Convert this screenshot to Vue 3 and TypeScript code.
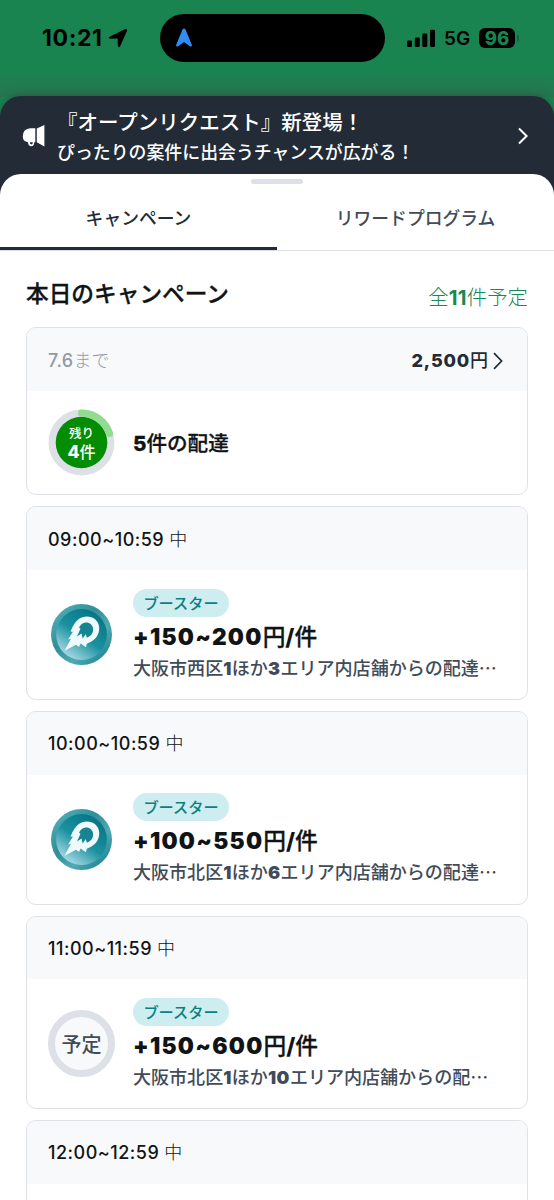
<script setup lang="ts">
interface Run {
  text: string
  kind: 'latin' | 'slash' | 'jp'
}

interface Offer {
  amount: string
  area: string
  scheduled: boolean
}

interface Boost {
  time: string
  offer?: Offer
}

const boosts: Boost[] = [
  { time: '09:00~10:59', offer: { amount: '+150~200円/件', area: '大阪市西区1ほか3エリア内店舗からの配達…', scheduled: false } },
  { time: '10:00~10:59', offer: { amount: '+100~550円/件', area: '大阪市北区1ほか6エリア内店舗からの配達…', scheduled: false } },
  { time: '11:00~11:59', offer: { amount: '+150~600円/件', area: '大阪市北区1ほか10エリア内店舗からの配…', scheduled: true } },
  { time: '12:00~12:59' },
]

// Splits a string into Latin and Japanese runs so each can carry its own weight.
function runs(text: string): Run[] {
  const parts = text.match(/[\x21-\x7e]+|[^\x21-\x7e]+/g) ?? []
  return parts.map((part) => ({
    text: part,
    kind: part === '/' ? 'slash' : /^[\x21-\x7e]/.test(part) ? 'latin' : 'jp',
  }))
}
</script>

<template>
  <div class="screen">
    <header class="status">
      <div class="clock">
        <span class="time">10:21</span>
        <svg class="loc" viewBox="0 0 20 20"><path d="M1.6 8.7 16.8 1.2Q19.6 .3 18.9 3L12.3 18Q10.8 20.6 9.8 17.8L9.7 10.6 2.4 10.7Q-.6 10.2 1.6 8.7Z" /></svg>
      </div>
      <div class="island">
        <svg class="nav" viewBox="0 0 18 20"><path d="M7.4 1.7Q9-.7 10.6 1.7L16.8 16.8Q17.2 19.3 14.9 18.2L9 14.1 3.1 18.2Q.8 19.3 1.2 16.8Z" /></svg>
      </div>
      <div class="signals">
        <svg class="bars" viewBox="0 0 29 19">
          <rect x="0" y="11.6" width="5" height="6.4" rx="1.3" />
          <rect x="7.8" y="8.6" width="5" height="9.4" rx="1.3" />
          <rect x="15.3" y="4.6" width="5" height="13.4" rx="1.3" />
          <rect x="23" y=".8" width="5" height="17.2" rx="1.3" />
        </svg>
        <span class="net">5G</span>
        <span class="battery">96</span>
        <span class="cap"></span>
      </div>
    </header>

    <section class="promo">
      <svg class="horn" viewBox="0 0 24 24">
        <path d="M13.3 4.2V18.2H12.2Q12.2 22.3 9.2 22.3 6.3 22.3 6 18.2 .8 17.3 .8 12.4 .8 4.8 8.5 4.2ZM14.8 4.4 22.4 1V22.5L14.8 18.3Z" />
        <path class="notch" d="M8 18.2H10.7V19.6Q9.3 21.2 8 19.6Z" />
      </svg>
      <div class="promo-copy">
        <p class="promo-title">『オープンリクエスト』新登場！</p>
        <p class="promo-sub">ぴったりの案件に出会うチャンスが広がる！</p>
      </div>
      <svg class="promo-arrow" viewBox="0 0 12 18"><path d="M2 1.5 9.6 9 2 16.5" /></svg>
    </section>

    <main class="sheet">
      <div class="handle"></div>
      <nav class="tabs">
        <div class="tab active"><span>キャンペーン</span></div>
        <div class="tab"><span>リワードプログラム</span></div>
      </nav>

      <div class="content">
        <div class="heading">
          <h1>本日のキャンペーン</h1>
          <span class="count">全<b>11</b>件予定</span>
        </div>

        <article class="card quest">
          <div class="card-head">
            <span class="until"><b>7.6</b>まで</span>
            <span class="reward"><b>2,500</b>円<svg viewBox="0 0 12 18"><path d="M2 1.2 9.6 9 2 16.8" /></svg></span>
          </div>
          <div class="card-body">
            <div class="medal">
              <svg class="progress" viewBox="0 0 68 68">
                <circle class="track" cx="34" cy="34" r="29.8" />
                <circle class="core" cx="34" cy="34" r="26.2" />
                <path class="arc" d="M34 4.2A29.8 29.8 0 0 1 62.3 24.7" />
              </svg>
              <span class="left">残り</span>
              <span class="num"><b>4</b>件</span>
            </div>
            <p class="quest-title"><b>5</b>件の配達</p>
          </div>
        </article>

        <article v-for="boost in boosts" :key="boost.time" class="card">
          <div class="card-head">
            <span class="range"><b>{{ boost.time }}</b> 中</span>
          </div>
          <div v-if="boost.offer" class="card-body">
            <div v-if="boost.offer.scheduled" class="medal planned">予定</div>
            <div v-else class="medal">
              <svg class="coin" viewBox="0 0 62 62">
                <defs>
                  <linearGradient id="rim" x1="0" y1="0" x2="1" y2="1">
                    <stop offset="0" stop-color="#55b1b9" />
                    <stop offset=".15" stop-color="#4aa8b1" />
                    <stop offset=".4" stop-color="#2f8e9a" />
                    <stop offset=".65" stop-color="#50aab3" />
                    <stop offset="1" stop-color="#087785" />
                  </linearGradient>
                  <linearGradient id="face" x1=".8" y1=".15" x2=".25" y2=".95">
                    <stop offset="0" stop-color="#087887" />
                    <stop offset=".5" stop-color="#1b91a0" />
                    <stop offset="1" stop-color="#a6d9e3" />
                  </linearGradient>
                </defs>
                <circle cx="31" cy="31" r="31" fill="url(#rim)" />
                <circle cx="31" cy="31" r="25.8" fill="url(#face)" />
                <path fill="#effafd" d="M13.8 47.5 20.3 35.2 17.4 36.2 22.2 28.2 19.8 27.9Q23.5 18.6 28 15.4C36 9.8 48.4 13.4 49 24 49.4 32 44 38 36.4 40.4L35.5 44 30 40.2 28.6 43.6 25.4 41.4Z" />
                <path fill="#168491" d="M28.6 24.2C30 19.6 36.4 16.8 40.6 20.6 45.2 25.2 42.4 32.6 36.4 34.2L35.4 30.6 32.2 35 31 30 26.4 33 30 25.2Z" />
              </svg>
            </div>
            <div class="info">
              <span class="badge">ブースター</span>
              <p class="amount"><span v-for="(run, i) in runs(boost.offer.amount)" :key="i" :class="run.kind">{{ run.text }}</span></p>
              <p class="area"><span v-for="(run, i) in runs(boost.offer.area)" :key="i" :class="run.kind">{{ run.text }}</span></p>
            </div>
          </div>
        </article>
      </div>
    </main>
  </div>
</template>

<style>
html,
body {
  margin: 0;
  overflow: hidden;
}
</style>

<style scoped>
.screen {
  width: 554px;
  height: 1200px;
  overflow: hidden;
  background: #198450;
  color: #111416;
  font-family: Inter, "Noto Sans CJK JP", sans-serif;
  font-weight: 500;
  white-space: nowrap;
}
p,
h1 {
  margin: 0;
}
b {
  font-weight: inherit;
}
svg {
  display: block;
  flex: none;
}
.jp {
  font-family: "Noto Sans CJK JP", sans-serif;
}

.status {
  display: flex;
  height: 97px;
  box-sizing: border-box;
  padding-top: 14px;
  color: #000;
  background: linear-gradient(#198450 0 70px, #267651 97px);
}
.clock {
  display: flex;
  width: 118px;
  height: 48px;
  padding-left: 42px;
  align-items: center;
}
.time {
  width: 66px;
  font-size: 23px;
  font-weight: 700;
  letter-spacing: 0.6px;
}
.loc {
  width: 20px;
  height: 20px;
}
.island {
  display: flex;
  width: 225px;
  height: 48px;
  border-radius: 24px;
  background: #000;
  align-items: center;
}
.nav {
  width: 18px;
  height: 20px;
  margin: 0 0 0 15px;
  fill: #2f8df5;
}
.signals {
  display: flex;
  height: 48px;
  padding-left: 22px;
  align-items: center;
}
.bars {
  width: 29px;
  height: 19px;
}
.net {
  width: 35px;
  margin-left: 8px;
  font-size: 19px;
  font-weight: 600;
}
.battery {
  width: 36px;
  height: 20px;
  border-radius: 6px;
  background: #000;
  color: #198450;
  font-size: 18.5px;
  font-weight: 800;
  line-height: 20px;
  text-align: center;
}
.cap {
  width: 2px;
  height: 7px;
  margin-left: 2px;
  border-radius: 0 2px 2px 0;
  background: #176642;
}

.promo {
  display: flex;
  height: 78px;
  margin-top: -1px;
  padding-bottom: 24px;
  border-radius: 21px 21px 0 0;
  background: #222b36;
  box-shadow: 0 0 8px rgba(40, 60, 60, 0.6);
  color: #fff;
}
.horn {
  width: 24px;
  height: 24px;
  margin: 28px 0 0 22px;
  fill: #fff;
}
.notch {
  fill: #222b36;
}
.promo-copy {
  width: 460px;
  margin-left: 11px;
}
.promo-title {
  height: 30px;
  margin-top: 12px;
  font-size: 20.5px;
  line-height: 30px;
}
.promo-sub {
  height: 28px;
  font-size: 17.9px;
  line-height: 29px;
}
.promo-arrow {
  width: 12px;
  height: 18px;
  margin-top: 31px;
  fill: none;
  stroke: #fff;
  stroke-width: 2;
}

.sheet {
  position: relative;
  height: 1026px;
  margin-top: -24px;
  border-radius: 21px 21px 0 0;
  background: #fff;
  overflow: hidden;
}
.handle {
  width: 52px;
  height: 5px;
  margin: 5px auto 0;
  border-radius: 3px;
  background: #dde0e6;
}
.tabs {
  display: flex;
  height: 66px;
  border-bottom: 1px solid #dcdfe6;
}
.tab {
  width: 277px;
  height: 66px;
  box-sizing: border-box;
  color: #414b58;
  font-size: 17.8px;
  line-height: 69px;
  text-align: center;
}
.tab.active {
  border-bottom: 3px solid #222b36;
  color: #222b36;
}

.content {
  padding: 0 26px;
}
.heading {
  display: flex;
  height: 76.4px;
  justify-content: space-between;
}
h1 {
  padding-top: 25px;
  font-size: 22.7px;
  font-weight: 500;
  line-height: 36px;
  -webkit-text-stroke: 0.3px currentColor;
}
.count {
  padding-top: 31px;
  color: #1a8754;
  font-size: 20.4px;
  font-weight: 300;
  line-height: 32px;
}
.count b {
  font-weight: 700;
  letter-spacing: 0.3px;
}

.card {
  height: 193.6px;
  box-sizing: border-box;
  margin-bottom: 11px;
  border: 1px solid #dfe1e6;
  border-radius: 10px;
  overflow: hidden;
}
.card.quest {
  height: 168px;
}
.card-head {
  display: flex;
  height: 62.6px;
  box-sizing: border-box;
  padding: 2px 21px 0;
  align-items: center;
  justify-content: space-between;
  background: #f8f9fb;
  line-height: 30px;
}
.until {
  color: #9199aa;
  font-size: 18px;
  font-weight: 300;
}
.until b {
  font-weight: 500;
  letter-spacing: 0.4px;
}
.reward {
  display: flex;
  color: #222b36;
  font-size: 18px;
  align-items: center;
}
.reward b {
  font-weight: 800;
  letter-spacing: 0.8px;
}
.reward svg {
  width: 12px;
  height: 18px;
  margin: 0 2px 0 4px;
  fill: none;
  stroke: #222b36;
  stroke-width: 1.7;
}
.range {
  font-size: 18px;
  font-weight: 300;
}
.range b {
  font-weight: 500;
  letter-spacing: 0.5px;
}
.card-body {
  display: flex;
  padding-left: 21px;
}
.medal {
  display: flex;
  flex: none;
  width: 67px;
  height: 67px;
  margin-top: 31px;
  align-items: center;
  justify-content: center;
}
.quest .medal {
  position: relative;
  flex-direction: column;
  margin-top: 18px;
  color: #fff;
}
.progress {
  position: absolute;
  inset: 0;
  width: 67px;
  height: 67px;
  fill: none;
}
.track {
  stroke: #dde0e6;
  stroke-width: 7.4;
}
.arc {
  stroke: #91dc91;
  stroke-width: 7.4;
  stroke-linecap: round;
}
.core {
  fill: #048c02;
}
.left {
  position: relative;
  padding-top: 2px;
  font-size: 12.5px;
  line-height: 17px;
}
.num {
  position: relative;
  font-size: 16px;
  line-height: 19px;
}
.num b {
  font-size: 17.5px;
  font-weight: 800;
}
.quest-title {
  margin: 35px 0 0 18px;
  font-size: 20.6px;
  line-height: 36px;
  -webkit-text-stroke: 0.3px currentColor;
}
.quest-title b {
  font-weight: 800;
}
.coin {
  width: 61px;
  height: 61px;
  margin-right: 1px;
}
.planned {
  box-sizing: border-box;
  border: 7px solid #dde0e6;
  border-radius: 50%;
  background: #f8f9fb;
  color: #414b58;
  font-size: 20px;
}
.info {
  padding: 18.6px 0 0 18px;
}
.badge {
  display: block;
  width: 96px;
  height: 28px;
  border-radius: 14px;
  background: #ceedf0;
  color: #0b8082;
  font-size: 15.2px;
  line-height: 29px;
  text-align: center;
}
.amount {
  height: 34px;
  margin-top: 2px;
  font-size: 22.7px;
  line-height: 34px;
}
.amount .jp {
  -webkit-text-stroke: 0.3px currentColor;
}
.amount .latin {
  font-weight: 900;
  letter-spacing: 1.25px;
}
.amount .slash {
  font-weight: 800;
}
.area {
  height: 28px;
  color: #414b58;
  font-size: 18.05px;
  line-height: 28px;
}
.area .latin {
  font-weight: 900;
  letter-spacing: 0.5px;
}
</style>
